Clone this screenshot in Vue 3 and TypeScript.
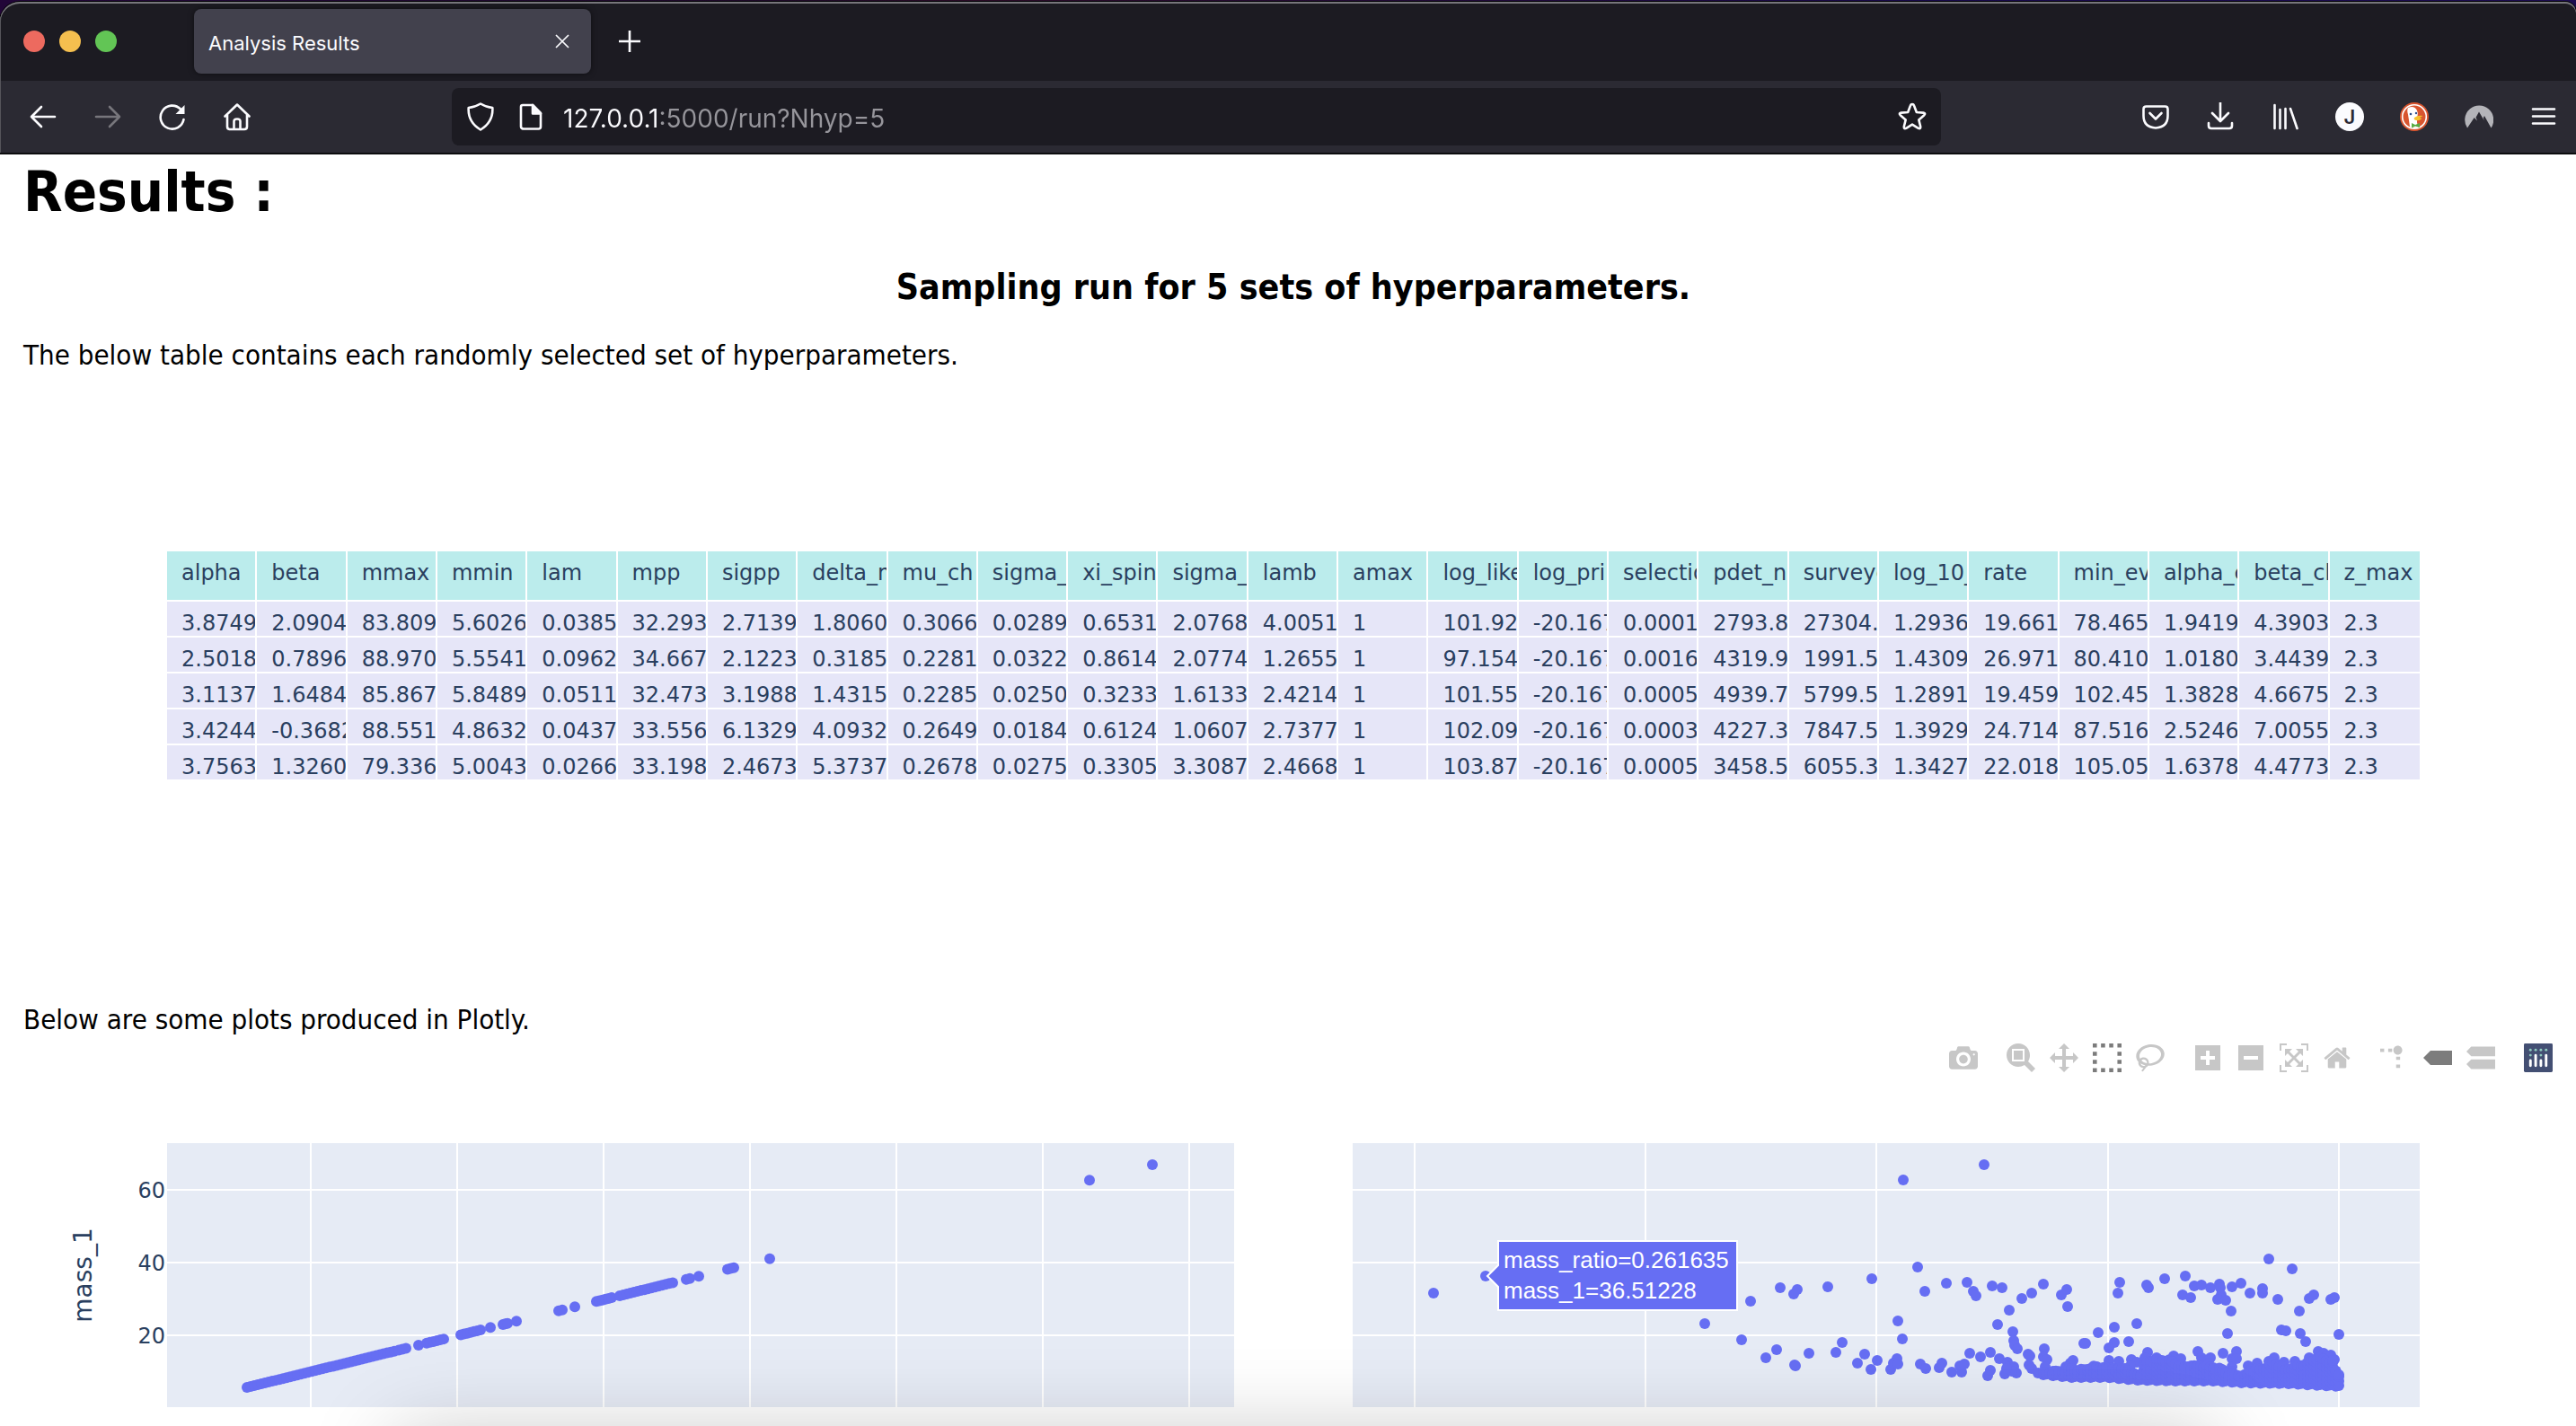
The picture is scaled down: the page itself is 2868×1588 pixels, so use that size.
<script setup lang="ts">
import { ref } from 'vue'

type Point = [number, number]

interface ModeIcon {
  name: string
  width: number
  path: string
  scale?: number
  active?: boolean
}

const address = ref('127.0.0.1:5000/run?Nhyp=5')

const columns: string[] = [
  'alpha', 'beta', 'mmax', 'mmin', 'lam', 'mpp', 'sigpp', 'delta_m', 'mu_ch', 'sigma_',
  'xi_spin', 'sigma_', 'lamb', 'amax', 'log_like', 'log_pri', 'selectio', 'pdet_n',
  'surveye', 'log_10_', 'rate', 'min_ev', 'alpha_c', 'beta_ch', 'z_max',
]

const rows: string[][] = [
  '3.8749 2.0904 83.809 5.6026 0.0385 32.293 2.7139 1.8060 0.3066 0.0289 0.6531 2.0768 4.0051 1 101.92 -20.167 0.0001 2793.8 27304. 1.2936 19.661 78.465 1.9419 4.3903 2.3',
  '2.5018 0.7896 88.970 5.5541 0.0962 34.667 2.1223 0.3185 0.2281 0.0322 0.8614 2.0774 1.2655 1 97.154 -20.167 0.0016 4319.9 1991.5 1.4309 26.971 80.410 1.0180 3.4439 2.3',
  '3.1137 1.6484 85.867 5.8489 0.0511 32.473 3.1988 1.4315 0.2285 0.0250 0.3233 1.6133 2.4214 1 101.55 -20.167 0.0005 4939.7 5799.5 1.2891 19.459 102.45 1.3828 4.6675 2.3',
  '3.4244 -0.3682 88.551 4.8632 0.0437 33.556 6.1329 4.0932 0.2649 0.0184 0.6124 1.0607 2.7377 1 102.09 -20.167 0.0003 4227.3 7847.5 1.3929 24.714 87.516 2.5246 7.0055 2.3',
  '3.7563 1.3260 79.336 5.0043 0.0266 33.198 2.4673 5.3737 0.2678 0.0275 0.3305 3.3087 2.4668 1 103.87 -20.167 0.0005 3458.5 6055.3 1.3427 22.018 105.05 1.6378 4.4773 2.3',
].map((line) => line.split(' '))

const modeGroups: ModeIcon[][] = [
  [
    { name: 'Download plot as a png', width: 1000, path: 'm500 450c-83 0-150-67-150-150 0-83 67-150 150-150 83 0 150 67 150 150 0 83-67 150-150 150z m400 150h-120c-16 0-34 13-39 29l-31 93c-6 15-23 28-40 28h-340c-16 0-34-13-39-28l-31-94c-6-15-23-28-40-28h-120c-55 0-100-45-100-100v-450c0-55 45-100 100-100h800c55 0 100 45 100 100v450c0 55-45 100-100 100z m-400-550c-138 0-250 112-250 250 0 138 112 250 250 250 138 0 250-112 250-250 0-138-112-250-250-250z m365 380c-19 0-35 16-35 35 0 19 16 35 35 35 19 0 35-16 35-35 0-19-16-35-35-35z' },
  ],
  [
    { name: 'Zoom', width: 1000, path: 'm1000-25l-250 251c40 63 63 138 63 218 0 224-182 406-407 406-224 0-406-182-406-406s183-406 407-406c80 0 155 22 218 62l250-250 125 125z m-812 250l0 438 437 0 0-438-437 0z m62 375l313 0 0-312-313 0 0 312z' },
    { name: 'Pan', width: 1000, path: 'm1000 350l-187 188 0-125-250 0 0 250 125 0-188 187-187-187 125 0 0-250-250 0 0 125-188-188 186-187 0 125 252 0 0-250-125 0 187-188 188 188-125 0 0 250 250 0 0-126 187 188z' },
    { name: 'Box Select', width: 1000, active: true, path: 'm0 850l0-143 143 0 0 143-143 0z m286 0l0-143 143 0 0 143-143 0z m285 0l0-143 143 0 0 143-143 0z m286 0l0-143 143 0 0 143-143 0z m-857-286l0-143 143 0 0 143-143 0z m857 0l0-143 143 0 0 143-143 0z m-857-285l0-143 143 0 0 143-143 0z m857 0l0-143 143 0 0 143-143 0z m-857-286l0-143 143 0 0 143-143 0z m286 0l0-143 143 0 0 143-143 0z m285 0l0-143 143 0 0 143-143 0z m286 0l0-143 143 0 0 143-143 0z' },
    { name: 'Lasso Select', width: 1031, path: 'm1018 538c-36 207-290 336-568 286-277-48-473-256-436-463 10-57 36-108 76-151-13-66 11-137 68-183 34-28 75-41 114-42l-55-70 0 0c-2-1-3-2-4-3-10-14-8-34 5-45 14-11 34-8 45 4 1 1 2 3 2 5l0 0 113 140c16 11 31 24 45 40 4 3 6 7 8 11 48-3 100 0 151 9 278 48 473 255 436 462z m-624-379c-80 14-149 48-197 96 42 42 109 47 156 9 33-26 47-66 41-105z m-187-74c-19 16-33 37-39 60 50-32 109-55 174-68-42-25-95-24-135 8z m360 75c-34-7-69-9-102-8 8 62-16 128-68 170-73 59-175 54-244-5-9 20-16 40-20 61-28 159 121 317 333 354s407-60 434-217c28-159-121-318-333-355z' },
  ],
  [
    { name: 'Zoom in', width: 875, path: 'm1 787l0-875 875 0 0 875-875 0z m687-500l-187 0 0-187-125 0 0 187-188 0 0 125 188 0 0 187 125 0 0-187 187 0 0-125z' },
    { name: 'Zoom out', width: 875, path: 'm0 788l0-876 875 0 0 876-875 0z m688-500l-500 0 0 125 500 0 0-125z' },
    { name: 'Autoscale', width: 1000, path: 'm250 850l-187 0-63 0 0-62 0-188 63 0 0 188 187 0 0 62z m688 0l-188 0 0-62 188 0 0-188 62 0 0 188 0 62-62 0z m-875-938l0 188-63 0 0-188 0-62 63 0 187 0 0 62-187 0z m875 188l0-188-188 0 0-62 188 0 62 0 0 62 0 188-62 0z m-125 188l-1 0-93-94-156 156 156 156 92-93 2 0 0 250-250 0 0-2 93-92-156-156-156 156 94 92 0 2-250 0 0-250 0 0 93 93 157-156-157-156-93 94 0 0 0-250 250 0 0 0-94 93 156 157 156-157-93-93 0 0 250 0 0 250z' },
    { name: 'Reset axes', width: 929, path: 'm786 296v-267q0-15-11-26t-25-10h-214v214h-143v-214h-214q-15 0-25 10t-11 26v267q0 1 0 2t0 2l321 264 321-264q1-1 1-4z m124 39l-34-41q-5-5-12-6h-2q-7 0-12 3l-386 322-386-322q-7-4-13-4-7 2-12 7l-35 41q-4 5-3 13t6 12l401 334q18 15 42 15t43-15l136-114v109q0 8 5 13t13 5h107q8 0 13-5t5-13v-227l122-102q5-5 6-12t-4-13z' },
  ],
  [
    { name: 'Toggle spike lines', width: 1000, scale: 1.5, path: 'M512 409c0-57-46-104-103-104-57 0-104 47-104 104 0 57 47 103 104 103 57 0 103-46 103-103z m-327-39l92 0 0 77-92 0z m-185 0l92 0 0 77-92 0z m370-186l92 0 0 77-92 0z m0-184l92 0 0 77-92 0z' },
    { name: 'Show closest data on hover', width: 1500, active: true, path: 'm375 725l0 0-375-375 375-374 0-1 1125 0 0 750-1125 0z' },
    { name: 'Compare data on hover', width: 1125, path: 'm187 786l0 2-187-188 188-187 0 0 937 0 0 373-938 0z m0-499l0 1-187-188 188-188 0 0 937 0 0 376-938-1z' },
  ],
]

const yTicks = [
  { label: '60', y: 52 },
  { label: '40', y: 133 },
  { label: '20', y: 214 },
]
const leftGrid = [160, 323, 486, 649, 812, 975, 1138]
const rightGrid = [69, 326, 583, 841, 1098]

/* Left panel: every sample lies on one straight trend. */
const runs: Point[] = [
  [89, 253], [258, 266], [280, 280], [289, 308], [327, 349], [360, 360], [374, 379], [389, 389],
  [436, 440], [454, 454], [478, 495], [504, 563], [578, 582], [592, 592], [624, 631], [671, 671],
  [1027, 1027], [1097, 1097],
]
const trend: Point[] = runs.flatMap(([from, to]) => {
  const n = Math.max(1, Math.ceil((to - from) / 4))
  const count = from === to ? 0 : n
  return Array.from({ length: count + 1 }, (_, i): Point => {
    const x = from + ((to - from) * i) / n
    return [x, 272 - 0.246 * (x - 89)]
  })
})

/* Right panel: scattered samples, then the dense low-mass band. */
const scattered: Point[] = [
  [90, 167], [148, 148], [392, 201], [613, 41], [703, 24], [629, 138], [578, 151], [476, 161],
  [495, 163], [491, 168], [529, 160], [443, 176], [637, 165], [661, 156], [684, 155], [691, 165],
  [694, 170], [712, 159], [723, 161], [756, 167], [769, 157], [745, 173], [795, 163], [789, 169],
  [796, 182], [731, 186], [718, 202], [735, 210], [736, 220], [737, 225], [740, 229], [607, 198],
  [612, 218], [433, 219], [472, 230], [460, 239], [508, 234], [538, 233], [545, 222], [492, 247],
  [493, 248], [562, 245], [570, 235], [577, 252], [584, 242], [599, 252], [606, 240], [602, 245],
  [607, 246], [632, 246], [638, 251], [653, 250], [656, 245], [667, 255], [676, 248], [678, 255],
  [681, 246], [687, 234], [699, 238], [710, 233], [720, 240], [707, 259], [710, 253], [726, 257],
  [729, 244], [731, 249], [736, 249], [739, 256], [734, 254], [728, 251], [752, 235], [754, 237],
  [753, 247], [756, 251], [763, 256], [770, 229], [769, 238], [773, 241], [771, 249], [802, 242],
  [799, 245], [794, 249], [814, 223],
  [1020, 129], [1046, 140], [927, 148], [904, 151], [854, 155], [852, 167], [884, 158], [886, 161],
  [924, 169], [933, 172], [937, 159], [945, 158], [955, 161], [965, 157], [966, 161], [967, 169],
  [963, 174], [972, 175], [979, 160], [989, 156], [999, 167], [1013, 162], [1013, 167], [1030, 174],
  [1054, 187], [1065, 173], [1070, 169], [1089, 174], [1093, 172], [978, 187], [974, 212], [873, 201],
  [848, 205], [830, 211], [816, 223], [864, 221], [848, 222], [842, 228], [1034, 208], [1039, 209],
  [1055, 212], [1061, 221], [1098, 213], [941, 232], [945, 239], [955, 239], [969, 234], [984, 232],
  [979, 240], [984, 240], [979, 249], [885, 233], [882, 239], [895, 239], [914, 237], [922, 240],
  [842, 242], [853, 243], [867, 241], [873, 244], [866, 248], [997, 248], [1007, 245], [1026, 239],
  [1020, 243], [1037, 244], [1049, 243], [1065, 239], [1075, 232], [1081, 234], [1089, 236], [1093, 241],
]

const upper: Point[] = [
  [769, 255], [790, 253], [800, 250], [812, 252], [824, 248], [832, 249], [842, 249], [852, 251],
  [862, 249], [866, 256], [879, 256], [882, 242], [905, 240], [914, 243], [926, 248], [936, 248],
  [945, 246], [958, 249], [968, 251], [975, 256], [995, 258], [1000, 252], [1018, 249], [1024, 243],
  [1034, 247], [1037, 252], [1050, 247], [1062, 245], [1074, 238], [1091, 242], [1095, 254], [1098, 256],
]
const lower: Point[] = [
  [769, 258], [800, 261], [841, 261], [871, 264], [914, 265], [957, 265], [991, 267], [1041, 268], [1098, 271],
]

function heightAt(line: Point[], x: number): number {
  for (let i = 1; i < line.length; i++) {
    const [x0, y0] = line[i - 1]
    const [x1, y1] = line[i]
    if (x <= x1) return y0 + ((y1 - y0) * (x - x0)) / (x1 - x0)
  }
  return line[line.length - 1][1]
}

const band: Point[] = []
for (let x = 769, i = 0; x <= 1098; x += 3.5, i++) {
  const top = heightAt(upper, x)
  const bottom = heightAt(lower, x)
  for (let y = bottom - (i % 3); y >= top; y -= 5) band.push([x, y])
  band.push([x, top + (i % 4)])
}
const cloud: Point[] = [...scattered, ...band]
</script>

<template>
  <div class="desktop">
    <div class="browser">
      <header class="titlebar">
        <div class="lights">
          <button class="light red" aria-label="Close window"></button>
          <button class="light amber" aria-label="Minimise window"></button>
          <button class="light green" aria-label="Zoom window"></button>
        </div>
        <div class="tab">
          <span class="tab-title">Analysis Results</span>
          <button class="tab-close" aria-label="Close tab">
            <svg width="16" height="16" viewBox="0 0 16 16"><path d="M1 1l14 14M15 1L1 15" stroke="#fbfbfe" stroke-width="1.700" /></svg>
          </button>
        </div>
        <button class="new-tab" aria-label="New tab">
          <svg width="26" height="26" viewBox="0 0 26 26"><path d="M13 1v24M1 13h24" stroke="#fbfbfe" stroke-width="2.6" /></svg>
        </button>
      </header>

      <nav class="toolbar">
        <button class="tool" aria-label="Back">
          <svg class="line" viewBox="0 0 32 32"><path d="M29 16H3M14 5L3 16l11 11" /></svg>
        </button>
        <button class="tool dim" aria-label="Forward">
          <svg class="line" viewBox="0 0 32 32"><path d="M3 16h26M18 5l11 11-11 11" /></svg>
        </button>
        <button class="tool" aria-label="Reload">
          <svg class="line" viewBox="0 0 32 32"><path d="M28.500 19A13 13 0 1 1 25 7.500" /><path d="M29.500 3v10h-10z" fill="currentColor" stroke="none" /></svg>
        </button>
        <button class="tool" aria-label="Home">
          <svg class="line" viewBox="0 0 32 32"><path d="M2.500 15.500L16 2.500l13.500 13M5 14v13q0 3 3 3h16q3 0 3-3V14M12.500 30v-9q0-2.500 3.500-2.500t3.500 2.500v9" /></svg>
        </button>

        <div class="urlbar">
          <button class="tool small" aria-label="Tracking protection">
            <svg class="line" viewBox="0 0 32 32"><path d="M16 1.500q6.500 4 13.300 4.500 1 16-13.300 24.500Q1.700 22 2.700 6 9.500 5.500 16 1.500z" /></svg>
          </button>
          <button class="tool small" aria-label="Site information">
            <svg class="line" viewBox="0 0 32 32"><path d="M7 3h11l9 9v15q0 2.500-2.500 2.500h-16Q5 29.500 5 27V5q0-2 2-2z" /><path d="M18 3v9.500h9z" fill="currentColor" /></svg>
          </button>
          <input v-model="address" class="address" type="text" aria-label="Address" spellcheck="false" />
          <button class="tool small" aria-label="Bookmark this page">
            <svg class="line" viewBox="0 0 32 32"><path d="M16 2q1.500 0 2 1.500l2.800 7.500 7.700.600q2.800.500.800 2.600l-6 5.200 1.900 7.600q.300 3-2.400 1.800L16 24.600l-6.800 4.200q-2.700 1.200-2.400-1.800l1.900-7.600-6-5.200q-2-2.100.800-2.600l7.700-.600L14 3.500Q14.500 2 16 2z" /></svg>
          </button>
        </div>

        <button class="tool" aria-label="Save to Pocket">
          <svg class="line" viewBox="0 0 32 32"><path d="M5.500 4.500h21q3 0 3 3V15q0 12.500-13.500 13.500Q2.500 27.500 2.500 15V7.500q0-3 3-3z" /><path d="M9.500 12l6.500 6.500 6.500-6.500" /></svg>
        </button>
        <button class="tool" aria-label="Downloads">
          <svg class="line" viewBox="0 0 32 32"><path d="M16 0v20M7 12l9 9 9-9M3 23v3q0 3 3 3h20q3 0 3-3v-3" /></svg>
        </button>
        <button class="tool" aria-label="Library">
          <svg class="line" viewBox="0 0 32 32"><path d="M4.500 3v26M10.500 8v21M16.500 7v22M22 7l7.500 22" /></svg>
        </button>
        <button class="tool" aria-label="Account J"><span class="avatar">J</span></button>
        <button class="tool" aria-label="DuckDuckGo">
          <svg viewBox="0 0 32 32">
            <circle cx="16" cy="16" r="16" fill="#d8552f" />
            <circle cx="16" cy="16" r="13.300" fill="none" stroke="#fff" stroke-width="1.600" />
            <path d="M9 6q7-3 10 3 1.500 3 .5 7-1.500 6 1 12-5 1.500-9.500-.500-1-8-2-14Q7.500 9 9 6z" fill="#fff" />
            <circle cx="12" cy="13" r="1.300" fill="#2d4f8e" /><circle cx="18" cy="12" r="1.200" fill="#2d4f8e" />
            <path d="M16 17q4-3 9.500-2-2 1.500-4 2 2 .5 3 1-4 3.500-8 1.500-1.500-1-.5-2.500z" fill="#f7c22d" />
            <path d="M13 23l4 2 5-2v5l-5-1.500-4 2z" fill="#58ab41" />
          </svg>
        </button>
        <button class="tool" aria-label="NordVPN">
          <svg viewBox="0 0 32 32"><path d="M3 28.500A16 16 0 1 1 29.500 28.500L22 15l-1.200 2.200 1 3L16 10.500l-3.500 6.300 1.500 3.700-3.300-3.500z" fill="#b4b4b9" /></svg>
        </button>
        <button class="tool" aria-label="Application menu">
          <svg class="line" viewBox="0 0 32 32"><path d="M4 7.500h24M4 15.500h24M4 23.500h24" /></svg>
        </button>
      </nav>

      <main class="page">
        <h1>Results :</h1>
        <h2>Sampling run for 5 sets of hyperparameters.</h2>
        <p>The below table contains each randomly selected set of hyperparameters.</p>

        <div class="table-plot">
          <table>
            <thead>
              <tr><th v-for="(c, i) in columns" :key="i" scope="col">{{ c }}</th></tr>
            </thead>
            <tbody>
              <tr v-for="(r, i) in rows" :key="i"><td v-for="(v, j) in r" :key="j">{{ v }}</td></tr>
            </tbody>
          </table>
        </div>

        <p>Below are some plots produced in Plotly.</p>

        <div class="modebar">
          <div v-for="(group, g) in modeGroups" :key="g" class="mode-group">
            <button v-for="m in group" :key="m.name" class="mode" :class="{ active: m.active }" :aria-label="m.name">
              <svg :viewBox="`0 0 ${m.width} 1000`">
                <path :transform="`matrix(${m.scale ?? 1} 0 0 ${-(m.scale ?? 1)} 0 850)`" :d="m.path" />
              </svg>
            </button>
          </div>
          <div class="mode-group">
            <a class="mode" href="#" aria-label="Produced with Plotly">
              <svg viewBox="0 0 132 132">
                <rect width="132" height="132" rx="6" fill="#434f73" />
                <g fill="#8fccbf">
                  <circle cx="30" cy="30" r="6" /><circle cx="54" cy="30" r="6" /><circle cx="78" cy="30" r="6" />
                  <circle cx="102" cy="30" r="6" /><circle cx="30" cy="54" r="6" /><circle cx="78" cy="54" r="6" />
                </g>
                <path d="M30 78v24M54 54v48M78 78v24M102 54v48" stroke="#fff" stroke-width="12" stroke-linecap="round" />
              </svg>
            </a>
          </div>
        </div>

        <svg class="chart" viewBox="0 0 2828 392" role="img" aria-label="Scatter plots of mass_1">
          <g class="ticks">
            <text v-for="t in yTicks" :key="t.label" x="158" :y="t.y + 88" text-anchor="end">{{ t.label }}</text>
          </g>
          <text class="axis-title" transform="translate(76 226) rotate(-90)" text-anchor="middle">mass_1</text>

          <g transform="translate(160 79)">
            <rect width="1188" height="294" fill="#e6ebf5" />
            <g class="grid">
              <line v-for="x in leftGrid" :key="x" :x1="x" :x2="x" y1="0" y2="294" />
              <line v-for="t in yTicks" :key="t.y" x1="0" x2="1188" :y1="t.y" :y2="t.y" />
            </g>
            <g class="dots"><circle v-for="(p, i) in trend" :key="i" :cx="p[0]" :cy="p[1]" r="6" /></g>
          </g>

          <g transform="translate(1480 79)">
            <rect width="1188" height="294" fill="#e6ebf5" />
            <g class="grid">
              <line v-for="x in rightGrid" :key="x" :x1="x" :x2="x" y1="0" y2="294" />
              <line v-for="t in yTicks" :key="t.y" x1="0" x2="1188" :y1="t.y" :y2="t.y" />
            </g>
            <g class="dots"><circle v-for="(p, i) in cloud" :key="i" :cx="p[0]" :cy="p[1]" r="6" /></g>
            <g class="hover">
              <path d="M150 148l12-12v-27h266v77H162v-26z" />
              <text x="168" y="139">mass_ratio=0.261635</text>
              <text x="168" y="173">mass_1=36.51228</text>
            </g>
          </g>
        </svg>
      </main>
    </div>
    <div class="dock-shadow"></div>
  </div>
</template>

<style>
body {
  margin: 0;
  background: #fff;
}
</style>

<style scoped>
.desktop {
  position: relative;
  min-height: 100vh;
  overflow: hidden;
  box-sizing: border-box;
  padding-top: 2px;
  background: linear-gradient(90deg, #220638, #1d0a28 30%, #2a0b26 38%, #17094a 75%, #1c0c50) top / 100% 24px no-repeat, #fff;
}
button {
  border: 0;
  padding: 0;
  background: none;
  color: inherit;
  font: inherit;
}
.browser {
  font-family: Inter, "Liberation Sans", sans-serif;
}
.titlebar {
  display: flex;
  align-items: center;
  height: 88px;
  padding-left: 26px;
  box-sizing: border-box;
  background: #1c1b22;
  border-radius: 22px 12px 0 0;
  box-shadow: inset 0 2px 0 #77767b, inset 1px 0 0 #55545a, 0 0 0 1px #050408;
}
.lights {
  display: flex;
  gap: 16px;
  margin-right: 86px;
}
.light {
  width: 24px;
  height: 24px;
  border-radius: 50%;
}
.red { background: #ed6a5f; }
.amber { background: #f5bf4f; }
.green { background: #62c555; }
.tab {
  display: flex;
  align-items: center;
  justify-content: space-between;
  width: 442px;
  height: 72px;
  box-sizing: border-box;
  padding: 0 16px;
  border-radius: 8px;
  background: #42414d;
  box-shadow: 0 0 6px rgba(0, 0, 0, 0.5);
  color: #fbfbfe;
}
.tab-title {
  padding-top: 4px;
  font-size: 22px;
  line-height: 28px;
}
.tab-close {
  display: flex;
  padding: 8px;
}
.new-tab {
  display: flex;
  margin-left: 30px;
}
.toolbar {
  display: flex;
  align-items: center;
  height: 82px;
  box-sizing: border-box;
  padding-left: 12px;
  background: #2b2a33;
  border-bottom: 2px solid #0c0c0e;
  box-shadow: inset 1px 0 0 #55545a;
  color: #fbfbfe;
}
.tool {
  display: flex;
  align-items: center;
  justify-content: center;
  flex: none;
  width: 72px;
  height: 64px;
}
.tool svg {
  width: 32px;
  height: 32px;
}
.tool.small {
  width: 56px;
}
.dim {
  color: #77767c;
}
.line {
  fill: none;
  stroke: currentColor;
  stroke-width: 2.6;
  stroke-linecap: round;
  stroke-linejoin: round;
}
.urlbar {
  display: flex;
  align-items: center;
  flex: 1;
  height: 64px;
  box-sizing: border-box;
  margin: 0 203px;
  padding: 0 4px;
  border-radius: 8px;
  background: #1c1b22;
}
.address {
  flex: 1;
  min-width: 0;
  height: 44px;
  box-sizing: border-box;
  margin-left: 8px;
  padding: 4px 0 0;
  border: 0;
  outline: 0;
  font: 28px/40px Inter, "Liberation Sans", sans-serif;
  background: linear-gradient(90deg, #fbfbfe 108px, #96959b 108px);
  background-clip: text;
  -webkit-background-clip: text;
  -webkit-text-fill-color: transparent;
}
.avatar {
  width: 32px;
  height: 32px;
  border-radius: 50%;
  background: #fbfbfe;
  color: #2b2a33;
  font-size: 22px;
  font-weight: 600;
  line-height: 32px;
  text-align: center;
}
.page {
  padding: 4px 14px 0 26px;
  background: #fff;
  color: #000;
  font-family: "DejaVu Sans Condensed", "Noto Sans", sans-serif;
}
h1 {
  margin: 0 0 44px;
  font-size: 63px;
  line-height: 76px;
}
h2 {
  margin: 0 0 31px;
  font-size: 39px;
  line-height: 48px;
  text-align: center;
}
p {
  margin: 0;
  font-size: 31px;
  line-height: 40px;
}
.table-plot {
  padding: 199px 160px 247px;
}
table {
  width: 100%;
  table-layout: fixed;
  border-spacing: 0;
  color: #2a3f5f;
  font-family: "DejaVu Sans", sans-serif;
  font-size: 24px;
}
th,
td {
  box-sizing: border-box;
  overflow: hidden;
  padding: 11px 0 0 16px;
  border: 0 solid #fff;
  border-width: 0 2px 2px 0;
  font-weight: 400;
  line-height: 27px;
  text-align: left;
  white-space: nowrap;
  vertical-align: top;
}
th {
  height: 56px;
  background: #bbecec;
}
td {
  height: 40px;
  background: #e6e6f8;
}
th:last-child,
td:last-child {
  border-right-width: 0;
}
tbody tr:last-child td {
  height: 38px;
  border-bottom-width: 0;
}
.modebar {
  display: flex;
  justify-content: flex-end;
  gap: 16px;
  padding: 7px 4px 0 0;
}
.mode-group {
  display: flex;
}
.mode {
  display: flex;
  justify-content: center;
  width: 48px;
  height: 32px;
}
.mode svg {
  width: 32px;
  height: 32px;
  fill: #c7c7c7;
}
.mode.active svg {
  fill: #7c7c7c;
}
.chart {
  display: block;
  width: 100%;
}
.ticks text {
  fill: #2a3f5f;
  font-family: "DejaVu Sans", sans-serif;
  font-size: 24px;
}
.axis-title {
  fill: #2a3f5f;
  font-family: "DejaVu Sans", sans-serif;
  font-size: 28px;
}
.grid line {
  stroke: #fff;
  stroke-width: 2;
}
.dots {
  fill: #666ef3;
}
.hover path {
  fill: #666ef3;
  stroke: #fff;
  stroke-width: 2;
}
.hover text {
  fill: #fff;
  font-family: "Liberation Sans", Arial, sans-serif;
  font-size: 26px;
}
.dock-shadow {
  position: absolute;
  right: 403px;
  bottom: -312px;
  left: 440px;
  height: 300px;
  box-shadow: 0 0 90px rgba(0, 0, 0, 0.23);
  pointer-events: none;
}
</style>
